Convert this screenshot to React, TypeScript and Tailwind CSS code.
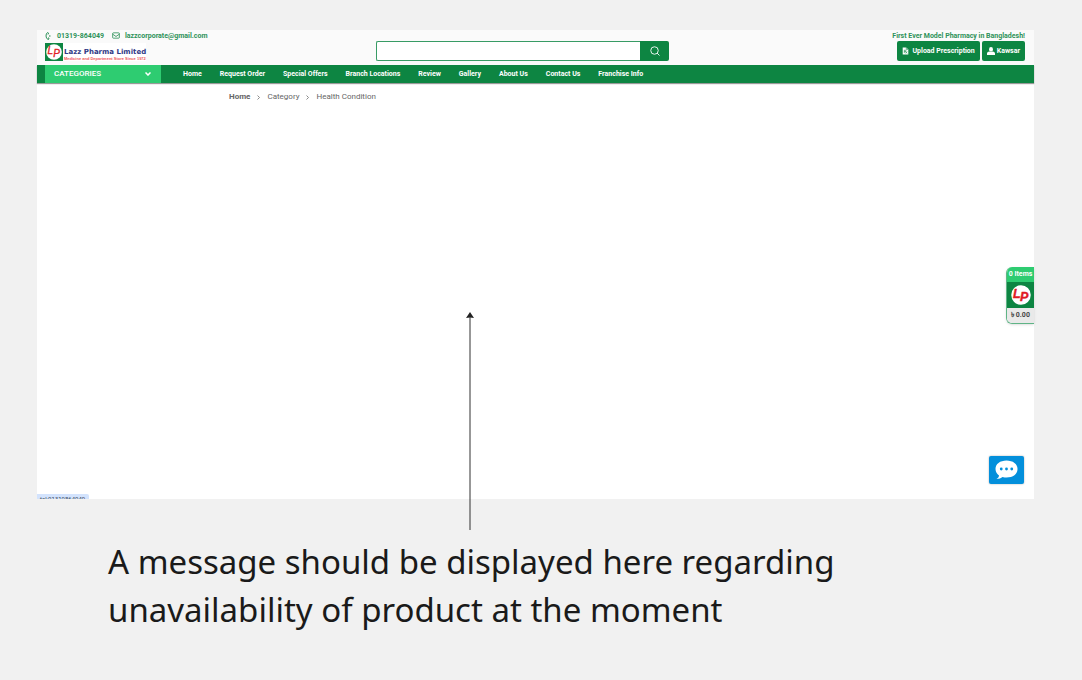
import React from "react";

const navLinks = [
  "Home",
  "Request Order",
  "Special Offers",
  "Branch Locations",
  "Review",
  "Gallery",
  "About Us",
  "Contact Us",
  "Franchise Info",
];

function Monogram({ className }: { className: string }) {
  return (
    <svg viewBox="0 0 40 40" className={className} role="img" aria-label="Lazz Pharma">
      <circle cx="20" cy="20" r="19.500" fill="#fff" />
      <g
        fill="#e01b24"
        stroke="#e01b24"
        strokeWidth="0.800"
        fontFamily="'Liberation Sans', sans-serif"
        fontStyle="italic"
      >
        <text x="4" y="26" fontSize="25">L</text>
        <text x="18" y="32" fontSize="25">P</text>
      </g>
    </svg>
  );
}

function PhoneIcon() {
  return (
    <svg viewBox="0 0 12 20" className="h-2.5 w-1.5" fill="none" stroke="#2e9259" strokeWidth="2">
      <path d="M5 3C1 6 1 14 6 17l2-1-1-3" />
      <path d="M5 3l2 1-1 3M9 8c1 1 1 3 0 4" />
    </svg>
  );
}

function MailIcon() {
  return (
    <svg viewBox="0 0 24 20" className="h-[7px] w-2" fill="none" stroke="#2e9259" strokeWidth="2.500">
      <rect x="2" y="2" width="20" height="16" rx="2" />
      <path d="M2 6l10 7 10-7" />
    </svg>
  );
}

function Header() {
  return (
    <header className="bg-[#fafafa] pr-[9px] pl-2">
      <div className="flex h-[11px] items-center justify-between text-[7px] leading-[10px] font-bold text-[#2e9259]">
        <div className="flex items-center gap-2">
          <a href="tel:01319864049" className="flex items-center gap-1.5">
            <PhoneIcon />
            01319-864049
          </a>
          <a href="mailto:lazzcorporate@gmail.com" className="flex items-center gap-[5px]">
            <MailIcon />
            lazzcorporate@gmail.com
          </a>
        </div>
        <p>First Ever Model Pharmacy in Bangladesh!</p>
      </div>
      <div className="flex h-6 items-start">
        <div className="flex w-[331px] shrink-0 pt-0.5">
          <a href="#home" className="flex h-[18px] bg-white">
            <span className="flex w-[18px] items-center justify-center bg-[#0d8542]">
              <Monogram className="size-4" />
            </span>
            <span className="flex flex-col justify-end pl-px whitespace-nowrap">
              <span className="font-['DejaVu_Sans',sans-serif] text-[7px] leading-[9px] font-bold text-[#303a86]">
                Lazz Pharma Limited
              </span>
              <span className="font-['Liberation_Sans',sans-serif] text-[4px] leading-[4px] font-bold text-[#ee5558]">
                Medicine and Department Store Since 1972
              </span>
            </span>
          </a>
        </div>
        <form className="flex h-5 w-[293px]" onSubmit={(e) => e.preventDefault()}>
          <input
            type="search"
            aria-label="Search products"
            className="min-w-0 flex-1 rounded-l-xs border border-r-0 border-[#389b65] bg-white px-2 text-[8px] outline-none"
          />
          <button aria-label="Search" className="flex w-[29px] items-center justify-center rounded-r-xs bg-[#0d8542]">
            <svg viewBox="0 0 20 20" className="size-2.5" fill="none" stroke="#e6f4ec" strokeWidth="2">
              <circle cx="9" cy="9" r="7.500" />
              <path d="M14 14l5 5" />
            </svg>
          </button>
        </form>
        <div className="ml-auto flex gap-0.5 text-[7px] font-bold text-white">
          <button className="flex h-5 items-center gap-[3px] rounded-xs bg-[#0d8542] px-[5px] whitespace-nowrap">
            <svg viewBox="0 0 16 20" className="h-2 w-[7px]">
              <path d="M1 1h9l5 5v13H1z" fill="#fff" />
              <path d="M10 1v5h5M5 15V8h3c2 0 2 3 0 3H5m3 0l4 5m0-5l-4 5" fill="none" stroke="#0d8542" strokeWidth="1.500" />
            </svg>
            Upload Prescription
          </button>
          <button className="flex h-5 items-center gap-0.5 rounded-xs bg-[#0d8542] px-[5px] whitespace-nowrap">
            <svg viewBox="0 0 20 20" className="size-2" fill="#fff">
              <ellipse cx="10" cy="6" rx="5" ry="6" />
              <path d="M0 20v-4c0-3 2-4 6-5 2 2 6 2 8 0 4 1 6 2 6 5v4z" />
            </svg>
            Kawsar
          </button>
        </div>
      </div>
    </header>
  );
}

function NavBar() {
  return (
    <nav className="flex h-[18px] items-stretch bg-[#0d8542] pl-2 text-white shadow-[0_1px_1px_#00000066]">
      <button className="flex w-[116px] items-center justify-between bg-[#2ecc71] pr-2.5 pl-[9px] text-[8px] font-medium">
        CATEGORIES
        <svg viewBox="0 0 12 8" className="h-1 w-1.5" fill="none" stroke="#fff" strokeWidth="3">
          <path d="M1 1l5 5 5-5" />
        </svg>
      </button>
      <ul className="flex items-center gap-[18px] pl-[22px] text-[7px] font-bold whitespace-nowrap">
        {navLinks.map((label) => (
          <li key={label}>
            <a href="#nav">{label}</a>
          </li>
        ))}
      </ul>
    </nav>
  );
}

function Chevron() {
  return (
    <svg viewBox="0 0 6 10" className="h-[5px] w-[3px]" fill="none" stroke="#666" strokeWidth="1.500">
      <path d="M1 1l4 4-4 4" />
    </svg>
  );
}

function Breadcrumbs() {
  return (
    <ol className="flex items-center gap-[7px] pt-2 pl-48 text-[8px] leading-[12px] text-[#666]">
      <li className="font-bold">
        <a href="#home">Home</a>
      </li>
      <Chevron />
      <li>
        <a href="#category">Category</a>
      </li>
      <Chevron />
      <li>Health Condition</li>
    </ol>
  );
}

function CartWidget() {
  return (
    <button
      aria-label="Cart"
      className="absolute top-[237px] right-0 flex w-7 flex-col overflow-hidden rounded-l-md border-b border-l border-[#5fb486] text-[7px] font-bold whitespace-nowrap shadow-sm"
    >
      <span className="flex h-[15px] w-full items-center justify-center bg-[#2ecc71] text-white">0 Items</span>
      <span className="flex h-[26px] w-full items-center justify-center bg-[#0d8542]">
        <Monogram className="size-5" />
      </span>
      <span className="flex h-[15px] w-full items-center justify-center bg-[#e9e9e9] text-[#444]">৳ 0.00</span>
    </button>
  );
}

function ChatButton() {
  return (
    <button
      aria-label="Open chat"
      className="absolute right-2.5 bottom-[15px] flex h-7 w-[35px] items-center justify-center rounded-xs bg-[#038fdb] shadow-[0_0_2px_#00000055]"
    >
      <svg viewBox="0 0 46 40" className="h-5 w-[23px]">
        <path
          d="M23 1C10 1 1 8 1 18c0 6 3 10 7 13 0 3-2 5-5 7 5 0 9-2 12-4 3 1 5 1 8 1 13 0 22-7 22-17S36 1 23 1z"
          fill="#fff"
        />
        <circle cx="12.500" cy="18" r="2.800" fill="#038fdb" />
        <circle cx="23" cy="18" r="2.800" fill="#038fdb" />
        <circle cx="33.500" cy="18" r="2.800" fill="#038fdb" />
      </svg>
    </button>
  );
}

function Arrow() {
  return (
    <svg viewBox="0 0 10 218" className="absolute top-[282px] left-[428px] h-[218px] w-2.5" aria-hidden="true">
      <path d="M5 5v213" stroke="#303030" strokeWidth="1" />
      <path d="M5 0l4 6q-4-1-8 0z" fill="#222" />
    </svg>
  );
}

export default function App() {
  return (
    <div className="min-h-screen bg-[#f1f1f1] pt-[30px] pr-12 pb-10 pl-[37px] font-[Roboto,'Noto_Sans',sans-serif]">
      <section className="relative min-h-[469px] bg-white">
        <Header />
        <NavBar />
        <Breadcrumbs />
        <CartWidget />
        <ChatButton />
        <div className="absolute bottom-0 left-0 h-[5px] w-[52px] overflow-hidden rounded-tr-xs bg-[#d3e3fd] pt-0.5 pl-[3px] text-[6px] leading-[6px] whitespace-nowrap text-[#3c4a60]">
          tel:01319864049
        </div>
        <Arrow />
      </section>
      <p className="mt-[39px] ml-[71px] max-w-[780px] font-['Noto_Sans',sans-serif] text-[33px] leading-[48px] text-[#1a1a1a]">
        A message should be displayed here regarding unavailability of product at the moment
      </p>
    </div>
  );
}
